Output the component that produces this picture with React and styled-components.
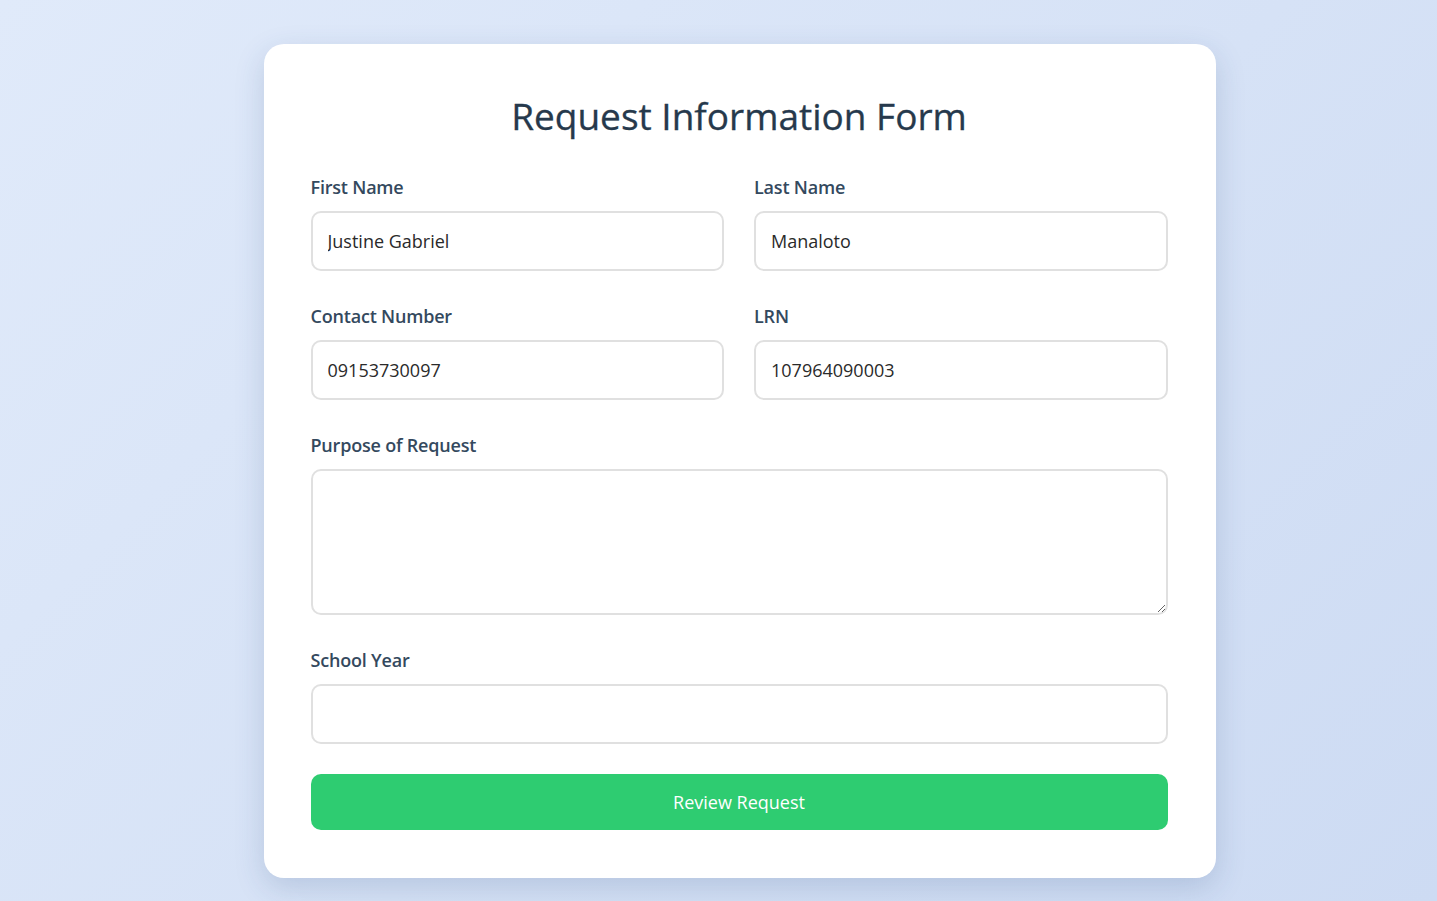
import React from "react";
import styled, { createGlobalStyle } from "styled-components";

const Global = createGlobalStyle`
  * { box-sizing: border-box; }
  html, body { margin: 0; padding: 0; }
  body {
    font-family: "Open Sans", "Noto Sans", Arial, sans-serif;
    background: linear-gradient(135deg, #e0eafa 0%, #d6e2f6 55%, #cddbf3 100%);
    min-height: 901px;
  }
`;

const Page = styled.div`
  min-height: 901px;
  display: flex;
  justify-content: center;
  align-items: flex-start;
  padding: 44px 0 0 42px;
`;

const Card = styled.div`
  width: 952px;
  background: #ffffff;
  border-radius: 20px;
  box-shadow: 0 10px 30px rgba(40, 70, 120, 0.18);
  padding: 48px 48px 48px 47px;
  display: flex;
  flex-direction: column;
`;

const Title = styled.h1`
  margin: 0 0 34px;
  text-align: center;
  font-size: 37px;
  line-height: 48px;
  font-weight: 400;
  color: #26394c;
  letter-spacing: 0;
  -webkit-text-stroke: 0.3px #26394c;
`;

const Row = styled.div`
  display: grid;
  grid-template-columns: 1fr 1fr;
  column-gap: 30px;
`;

const Group = styled.div`
  display: flex;
  flex-direction: column;
  margin-bottom: ${(p) => p.$mb || 32}px;
`;

const Label = styled.label`
  font-size: 18px;
  line-height: 24px;
  font-weight: 600;
  color: #34495e;
  margin: 1px 0 12px;
  letter-spacing: -0.2px;
`;

const Input = styled.input`
  height: 60px;
  width: 100%;
  border: 2px solid #e0e0e0;
  border-radius: 10px;
  padding: 0 15px;
  font-family: inherit;
  font-size: 18px;
  color: #2a2a2a;
  background: #fff;
  outline: none;
`;

const TextArea = styled.textarea`
  height: 146px;
  width: 100%;
  border: 2px solid #e0e0e0;
  border-radius: 10px;
  padding: 15px;
  font-family: inherit;
  font-size: 18px;
  color: #2a2a2a;
  background: #fff;
  outline: none;
  resize: vertical;
  display: block;
`;

const Button = styled.button`
  height: 56px;
  flex-shrink: 0;
  width: 100%;
  border: none;
  border-radius: 10px;
  background: #2ecc71;
  color: #fff;
  font-family: inherit;
  font-size: 18px;
  cursor: pointer;
`;

export default function App() {
  return (
    <>
      <Global />
      <Page>
        <Card>
          <Title>Request Information Form</Title>
          <Row>
            <Group>
              <Label>First Name</Label>
              <Input defaultValue="Justine Gabriel" />
            </Group>
            <Group>
              <Label>Last Name</Label>
              <Input defaultValue="Manaloto" />
            </Group>
          </Row>
          <Row>
            <Group>
              <Label>Contact Number</Label>
              <Input defaultValue="09153730097" />
            </Group>
            <Group>
              <Label>LRN</Label>
              <Input defaultValue="107964090003" />
            </Group>
          </Row>
          <Group>
            <Label>Purpose of Request</Label>
            <TextArea />
          </Group>
          <Group $mb={30}>
            <Label>School Year</Label>
            <Input />
          </Group>
          <Button>Review Request</Button>
        </Card>
      </Page>
    </>
  );
}
